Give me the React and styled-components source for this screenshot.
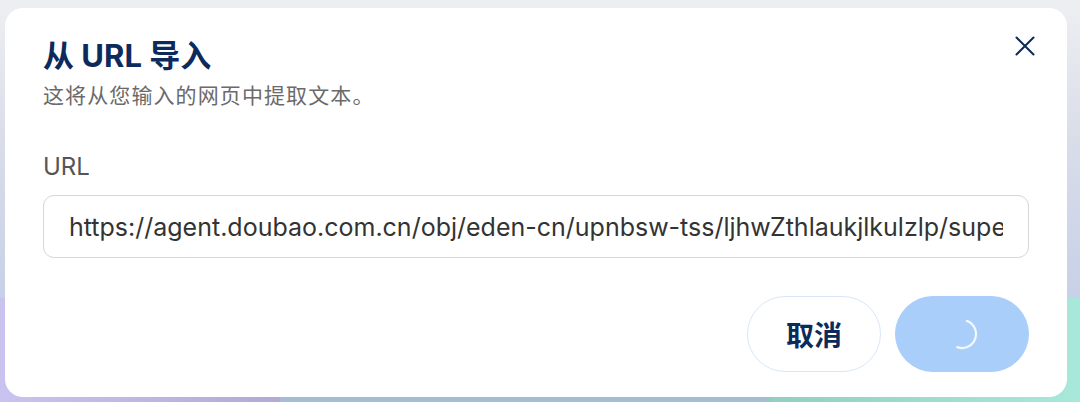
import React from "react";
import styled, { createGlobalStyle } from "styled-components";

const Global = createGlobalStyle`
  html, body { margin: 0; padding: 0; }
  body { width: 1080px; height: 402px; overflow: hidden; font-family: Inter, "Noto Sans CJK SC", sans-serif; }
`;

const Stage = styled.div`
  position: relative;
  width: 1080px;
  height: 402px;
  overflow: hidden;
  display: grid;
  grid-template-rows: 298px 1fr;
  background: linear-gradient(180deg, #eeeff2 0%, #d9dde9 35%, #bcc8e6 100%);
`;

const Band = styled.div`
  grid-row: 2;
  display: grid;
  grid-template-columns: 280px 490px 1fr;
`;

const BandPart = styled.div`
  background: ${(p) => p.$bg};
`;

const Dialog = styled.div`
  position: absolute;
  left: 5px;
  top: 8px;
  width: 1062px;
  height: 389px;
  box-sizing: border-box;
  background: #ffffff;
  border-radius: 18px;
  padding: 28px 38px 0 38px;
  display: flex;
  flex-direction: column;
`;

const Header = styled.div`
  display: flex;
  justify-content: space-between;
  align-items: flex-start;
`;

const Titles = styled.div`
  display: flex;
  flex-direction: column;
  gap: 6px;
`;

const Title = styled.h2`
  margin: 0;
  font-size: 31px;
  line-height: 40px;
  font-weight: 700;
  color: #0d2a5c;
`;

const Subtitle = styled.p`
  margin: 0;
  font-size: 21px;
  line-height: 28px;
  color: #6a6a6a;
  letter-spacing: 1.1px;
`;

const CloseBtn = styled.button`
  border: none;
  background: none;
  padding: 0;
  margin: -4px -10px 0 0;
  width: 28px;
  height: 28px;
  display: flex;
  align-items: center;
  justify-content: center;
  color: #0d2a5c;
  cursor: pointer;
`;

const Label = styled.label`
  margin-top: 42px;
  font-size: 24px;
  line-height: 30px;
  color: #555555;
`;

const Input = styled.input`
  margin-top: 13px;
  box-sizing: border-box;
  width: 986px;
  height: 63px;
  border: 1px solid #d6d6d6;
  border-radius: 11px;
  padding: 0 25px 0 25px;
  font-family: Inter, "Noto Sans CJK SC", sans-serif;
  font-size: 25px;
  color: #333333;
  outline: none;
  background: #fff;
`;

const Footer = styled.div`
  margin-top: 38px;
  display: flex;
  justify-content: flex-end;
  gap: 14px;
  width: 986px;
`;

const Button = styled.button`
  box-sizing: border-box;
  width: 134px;
  height: 76px;
  border-radius: 38px;
  border: 1px solid ${(p) => (p.$primary ? "#a9cef9" : "#d8e6fb")};
  background: ${(p) => (p.$primary ? "#a9cef9" : "#ffffff")};
  color: #0d2a5c;
  font-family: Inter, "Noto Sans CJK SC", sans-serif;
  font-size: 28px;
  font-weight: 700;
  display: flex;
  align-items: center;
  justify-content: center;
  cursor: pointer;
`;

const Spinner = () => (
  <svg width="34" height="34" viewBox="0 0 34 34">
    <path
      d="M17 3 A14 14 0 0 1 17 31"
      transform="rotate(20 17 17)"
      fill="none"
      stroke="rgba(255,255,255,0.85)"
      strokeWidth="2.2"
      strokeLinecap="round"
    />
  </svg>
);

export default function App() {
  return (
    <>
      <Global />
      <Stage>
        <Band>
          <BandPart $bg="linear-gradient(90deg, #c9c3f0, #b4a9d6)" />
          <BandPart $bg="#a2bed2" />
          <BandPart $bg="linear-gradient(90deg, #93cfc0, #a8e8da)" />
        </Band>
        <Dialog role="dialog">
          <Header>
            <Titles>
              <Title>从 URL 导入</Title>
              <Subtitle>这将从您输入的网页中提取文本。</Subtitle>
            </Titles>
            <CloseBtn aria-label="关闭">
              <svg width="20" height="20" viewBox="0 0 20 20">
                <path d="M1.5 1.5 L18.5 18.5 M18.5 1.5 L1.5 18.5" stroke="currentColor" strokeWidth="2" strokeLinecap="round" />
              </svg>
            </CloseBtn>
          </Header>
          <Label>URL</Label>
          <Input
            readOnly
            value="https://agent.doubao.com.cn/obj/eden-cn/upnbsw-tss/ljhwZthlaukjlkulzlp/super-agent-web-pages/index.html"
          />
          <Footer>
            <Button>取消</Button>
            <Button $primary aria-label="加载中">
              <Spinner />
            </Button>
          </Footer>
        </Dialog>
      </Stage>
    </>
  );
}
